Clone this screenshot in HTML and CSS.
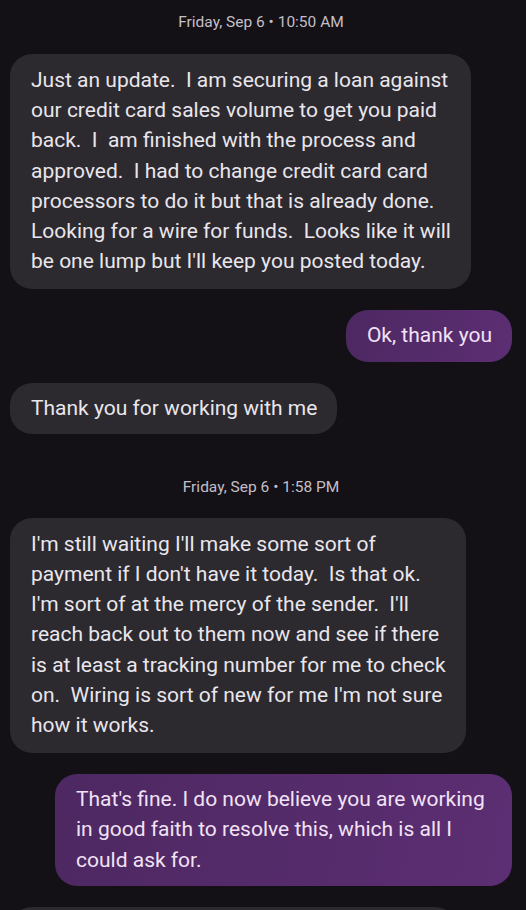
FILE: index.html
```html
<!DOCTYPE html>
<html lang="en">
<head>
    <meta charset="UTF-8">
    <meta name="viewport" content="width=device-width, initial-scale=1.0">
    <title>Messages</title>
    <link rel="stylesheet" href="styles.css">
</head>
<body>
    <div class="thread">
        <div class="stamp">Friday, Sep 6 • 10:50 AM</div>

        <div class="message in">Just an update.  I am securing a loan against<br>our credit card sales volume to get you paid<br>back.  I  am finished with the process and<br>approved.  I had to change credit card card<br>processors to do it but that is already done.<br>Looking for a wire for funds.  Looks like it will<br>be one lump but I'll keep you posted today.</div>

        <div class="message out short">Ok, thank you</div>

        <div class="message in short">Thank you for working with me</div>

        <div class="stamp">Friday, Sep 6 • 1:58 PM</div>

        <div class="message in">I'm still waiting I'll make some sort of<br>payment if I don't have it today.  Is that ok.<br>I'm sort of at the mercy of the sender.  I'll<br>reach back out to them now and see if there<br>is at least a tracking number for me to check<br>on.  Wiring is sort of new for me I'm not sure<br>how it works.</div>

        <div class="message out wide">That's fine. I do now believe you are working<br>in good faith to resolve this, which is all I<br>could ask for.</div>

        <!-- next message, only its top edge is on screen -->
        <div class="message in peek"></div>
    </div>
</body>
</html>
```

FILE: styles.css
```css
body {
    margin: 0;
    padding: 0;
    background-color: #141116;
    font-family: Roboto, "Noto Sans", sans-serif;
    height: 910px;
    overflow: hidden;
}

.thread {
    display: flex;
    flex-direction: column;
    gap: 21px;
    padding: 0 14px 0 10px;
}

.stamp {
    align-self: center;
    color: #c3bfc8;
    font-size: 15.5px;
    line-height: 20px;
}

.thread .stamp:first-child {
    margin-top: 12px;
    margin-bottom: 1px;
}

.thread .message + .stamp {
    margin-top: 22px;
    margin-bottom: 0;
}

.message {
    box-sizing: border-box;
    padding: 11px 20px 13px 21px;
    border-radius: 22px;
    font-size: 21px;
    line-height: 30.2px;
    white-space: pre;
}

.message.short {
    padding-top: 10px;
    padding-bottom: 11px;
}

.message.in {
    align-self: flex-start;
    background: #2c292f;
    color: #e9e6ec;
}

.message.in.peek {
    width: 447px;
    height: 60px;
}

.message.out {
    align-self: flex-end;
    background: linear-gradient(100deg, #4d2861, #5c2e73);
    color: #f2e2f6;
}

.message.out.wide {
    width: 457px;
    padding-top: 10px;
    padding-bottom: 11px;
}
```
